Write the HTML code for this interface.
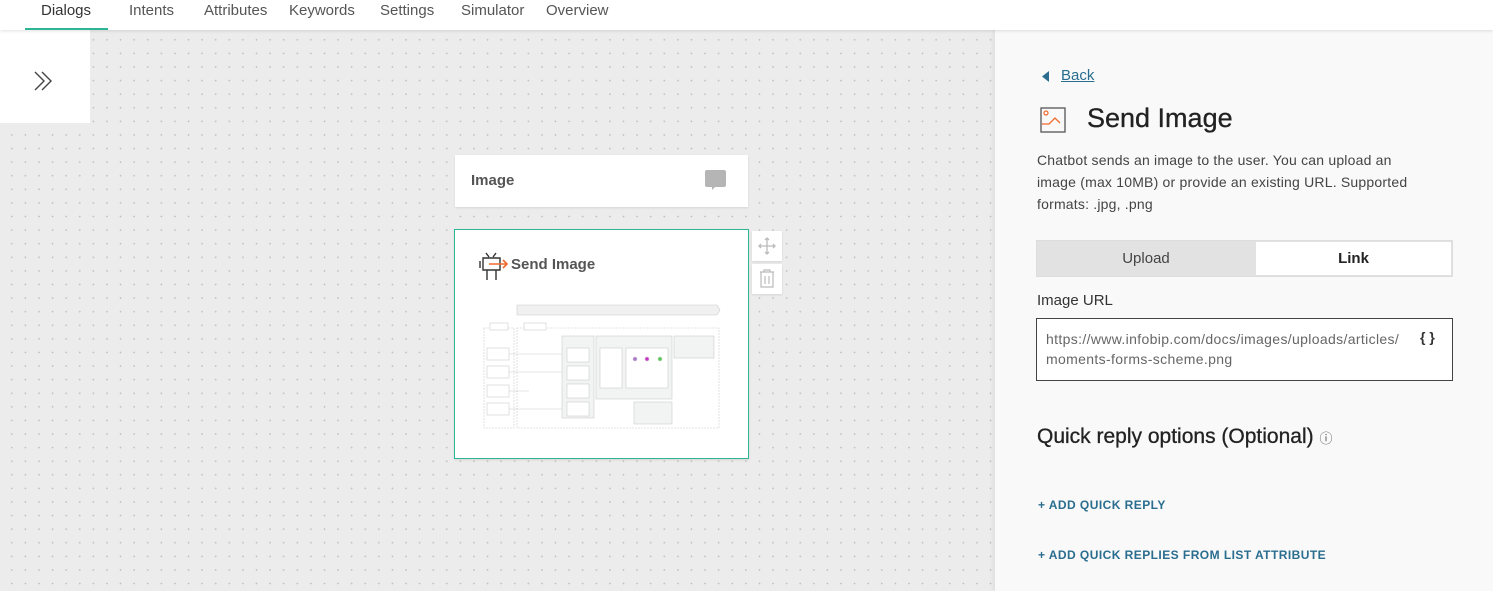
<!DOCTYPE html>
<html><head><style>
*{box-sizing:border-box;margin:0;padding:0}
body{width:1493px;height:591px;overflow:hidden;font-family:"Liberation Sans",sans-serif;background:#ececec;position:relative}
.top{position:absolute;left:0;top:0;width:1493px;height:30px;background:#fff;box-shadow:0 1px 3px rgba(0,0,0,.12);z-index:3}
.top span{position:absolute;top:2px;font-size:15px;color:#555}
.canvas{position:absolute;left:0;top:30px;width:995px;height:561px;background-color:#ececec;background-image:radial-gradient(circle,#bdbdbd 0.7px,transparent 0.9px);background-size:13.6px 13.6px;background-position:5px 3px}
.side{position:absolute;left:0;top:30px;width:90px;height:93px;background:#fff}
.card{position:absolute;background:#fff;box-shadow:0 1px 2px rgba(0,0,0,.1)}
.panel{position:absolute;left:995px;top:30px;width:498px;height:561px;background:#f9f9f9;box-shadow:-2px 0 4px rgba(0,0,0,.06)}
.link{position:absolute;font-size:12px;font-weight:bold;color:#2a6d8f;letter-spacing:.45px}
</style></head><body>
<div class="canvas"></div>
<div class="top">
<span style="left:41px;color:#333">Dialogs</span>
<div style="position:absolute;left:25px;top:28px;width:83px;height:2px;background:#2db596"></div>
<span style="left:129px">Intents</span><span style="left:204px">Attributes</span><span style="left:289px">Keywords</span><span style="left:380px">Settings</span><span style="left:461px">Simulator</span><span style="left:546px">Overview</span>
</div>
<div class="side"><svg style="position:absolute;left:32px;top:40px" width="22" height="22" viewBox="0 0 22 22" fill="none" stroke="#444" stroke-width="1.4"><path d="M3 2l9 9-9 9M10 2l9 9-9 9"/></svg></div>

<div class="card" style="left:455px;top:155px;width:293px;height:52px">
<div style="position:absolute;left:16px;top:17px;font-size:15px;font-weight:bold;color:#555">Image</div>
<svg style="position:absolute;left:249px;top:15px" width="23" height="22" viewBox="0 0 23 22"><path d="M1 2q0-2 2-2h17q2 0 2 2v13q0 2-2 2H11l-3 3v-3H3q-2 0-2-2z" fill="#b5b5b5"/></svg>
</div>

<div class="card" style="left:454px;top:229px;width:295px;height:230px;border:1px solid #2db596">
<svg style="position:absolute;left:24px;top:22px" width="32" height="30" viewBox="0 0 32 30" fill="none" stroke="#333" stroke-width="1.4"><path d="M7 1l3 4M17 1l-3 4M4 6h17v12H4zM1 9v7M8 18v10M17 18v10"/><path d="M10 12h18M24 8l4 4-4 4" stroke="#f26a2a" stroke-width="1.6"/></svg>
<div style="position:absolute;left:56px;top:26px;font-size:15px;font-weight:bold;color:#555">Send Image</div>
<svg style="position:absolute;left:27px;top:73px" width="240" height="128" viewBox="0 0 240 128" fill="none" stroke="#ccc" stroke-width=".6">
<path d="M35 2h200l3 5-3 5H35z" fill="#f0f0f0"/>
<rect x="2" y="25" width="30" height="100" stroke-dasharray="2 1"/><rect x="35" y="25" width="202" height="100" stroke-dasharray="2 1"/>
<rect x="8" y="20" width="18" height="7" fill="#fff"/><rect x="42" y="20" width="22" height="7" fill="#fff"/>
<rect x="80" y="33" width="32" height="82" fill="#f2f4f3"/><rect x="114" y="33" width="76" height="63" fill="#f2f4f3"/><rect x="192" y="33" width="40" height="22" fill="#f2f4f3"/><rect x="152" y="99" width="38" height="22" fill="#f2f4f3"/>
<rect x="5" y="45" width="22" height="12"/><rect x="5" y="63" width="22" height="12"/><rect x="5" y="82" width="22" height="12"/><rect x="5" y="100" width="22" height="12"/>
<path d="M27 51h53M27 69h53M27 88h20M27 106h53"/>
<rect x="85" y="45" width="22" height="14" fill="#fff"/><rect x="85" y="63" width="22" height="14" fill="#fff"/><rect x="85" y="81" width="22" height="14" fill="#fff"/><rect x="85" y="99" width="22" height="14" fill="#fff"/>
<rect x="118" y="45" width="22" height="40" fill="#fff"/><rect x="144" y="45" width="42" height="40" fill="#fff"/>
<circle cx="153" cy="56" r="2" fill="#a7c"/><circle cx="165" cy="56" r="2" fill="#c3c"/><circle cx="178" cy="56" r="2" fill="#5c5"/>
</svg>
</div>
<div class="card" style="left:752px;top:231px;width:30px;height:30px"><svg style="position:absolute;left:6px;top:6px" width="18" height="18" viewBox="0 0 18 18" fill="none" stroke="#bbb" stroke-width="1.3"><path d="M9 1v16M1 9h16M7 3l2-2 2 2M7 15l2 2 2-2M3 7L1 9l2 2M15 7l2 2-2 2"/></svg></div>
<div class="card" style="left:752px;top:264px;width:30px;height:30px"><svg style="position:absolute;left:7px;top:5px" width="16" height="19" viewBox="0 0 16 19" fill="none" stroke="#bbb" stroke-width="1.2"><path d="M1 3h14M5 3V1h6v2M2 3v15h12V3M6 7v8M10 7v8"/></svg></div>

<div class="panel">
<svg style="position:absolute;left:47px;top:41px" width="8" height="11"><path d="M7 0v11L0 5.5z" fill="#2a6d8f"/></svg>
<div style="position:absolute;left:66px;top:37px;font-size:15px;color:#2a6d8f;text-decoration:underline">Back</div>
<svg style="position:absolute;left:45px;top:77px" width="26" height="26" viewBox="0 0 26 26" fill="none"><rect x="1" y="1" width="24" height="24" stroke="#555" stroke-width="1.3"/><circle cx="6" cy="6" r="2" stroke="#f26a2a" stroke-width="1.2"/><path d="M2 17h7l6-6 5 5" stroke="#f26a2a" stroke-width="1.3"/></svg>
<div style="position:absolute;left:92px;top:73px;font-size:27px;color:#222;-webkit-text-stroke:.3px #222">Send Image</div>
<div style="position:absolute;left:42px;top:119px;width:372px;font-size:14px;line-height:22px;color:#444;letter-spacing:.2px">Chatbot sends an image to the user. You can upload an image (max 10MB) or provide an existing URL. Supported formats: .jpg, .png</div>
<div style="position:absolute;left:41px;top:210px;width:417px;height:37px;background:#e2e2e2;border:1px solid #ddd">
<div style="position:absolute;left:0;top:0;width:218px;height:35px;text-align:center;line-height:35px;font-size:15px;color:#444">Upload</div>
<div style="position:absolute;left:219px;top:1px;width:195px;height:33px;background:#fff;text-align:center;line-height:33px;font-size:15px;font-weight:bold;color:#222">Link</div>
</div>
<div style="position:absolute;left:42px;top:262px;font-size:15px;color:#333">Image URL</div>
<div style="position:absolute;left:41px;top:288px;width:417px;height:63px;background:#fff;border:1px solid #444">
<div style="position:absolute;left:9px;top:10px;width:364px;font-size:14px;line-height:20px;color:#666;word-break:break-all;letter-spacing:.35px">https://www.infobip.com/docs/images/uploads/articles/moments-forms-scheme.png</div>
<div style="position:absolute;left:383px;top:10px;font-size:14px;font-weight:bold;color:#333">{ }</div>
</div>
<div style="position:absolute;left:42px;top:395px;font-size:21px;color:#222;-webkit-text-stroke:.3px #222">Quick reply options (Optional) <span style="font-size:13px;color:#555;-webkit-text-stroke:0">ⓘ</span></div>
<div class="link" style="left:43px;top:468px">+ ADD QUICK REPLY</div>
<div class="link" style="left:43px;top:518px">+ ADD QUICK REPLIES FROM LIST ATTRIBUTE</div>
</div>
</body></html>
